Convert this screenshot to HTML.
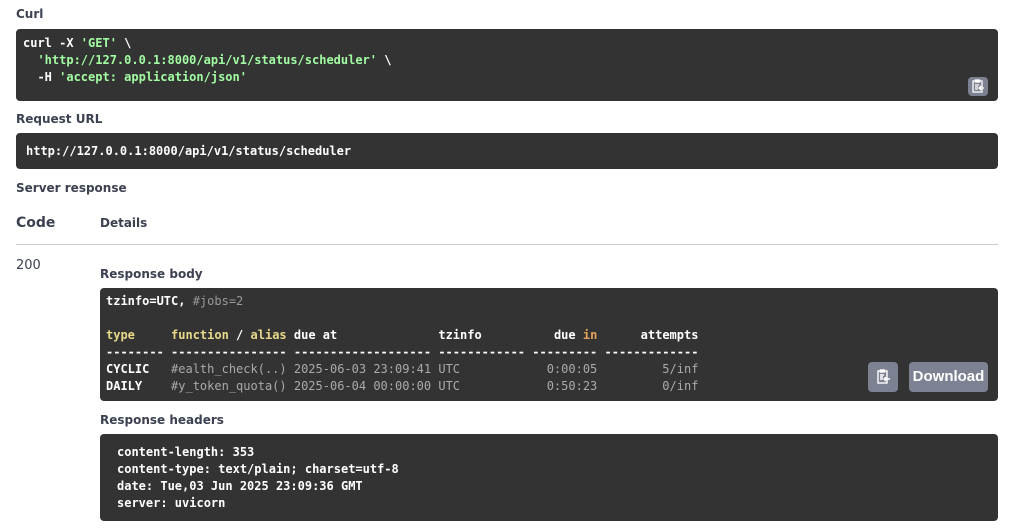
<!DOCTYPE html>
<html><head><meta charset="utf-8"><style>
*{margin:0;padding:0;box-sizing:border-box}
body{width:1012px;height:531px;background:#fff;position:relative;overflow:hidden;font-family:"DejaVu Sans","Liberation Sans",sans-serif;color:#3b4151}
.lbl{position:absolute;font-size:12px;font-weight:bold;color:#3b4151}
.box{position:absolute;background:#333;border-radius:4px}
pre{position:absolute;font-family:"DejaVu Sans Mono","Liberation Mono",monospace;font-size:12px;line-height:17px;color:#fff;font-weight:bold;white-space:pre}
.g{color:#a2fca2}.y{color:#e8d98a}.gr{color:#999}.o{color:#e3a15a}.l{color:#aaa;font-weight:normal}
.btn{position:absolute;background:#7d8293;border-radius:4px;color:#fff}
</style></head><body>
<div class="lbl" style="left:16px;top:7px">Curl</div>
<div class="box" style="left:16px;top:29px;width:982px;height:72px"></div>
<pre style="left:23px;top:35px">curl -X <span class="g">'GET'</span> \
  <span class="g">'http://127.0.0.1:8000/api/v1/status/scheduler'</span> \
  -H <span class="g">'accept: application/json'</span></pre>
<div class="btn" style="left:968px;top:77px;width:20px;height:19px"><svg width="20" height="19" viewBox="0 0 20 19"><g fill="none" stroke="#fff" stroke-width="1.3"><rect x="5" y="4" width="9" height="11"/><rect x="7.5" y="3" width="4" height="2" fill="#fff"/><path d="M7 8h4M7 10h3M7 12h3M16 11h-5M13 9l-2 2 2 2"/></g></svg></div>
<div class="lbl" style="left:16px;top:112px">Request URL</div>
<div class="box" style="left:16px;top:133px;width:982px;height:36px"></div>
<pre style="left:26px;top:143px">http://127.0.0.1:8000/api/v1/status/scheduler</pre>
<div class="lbl" style="left:16px;top:181px">Server response</div>
<div class="lbl" style="left:16px;top:215px;font-size:14px">Code</div>
<div class="lbl" style="left:100px;top:216px">Details</div>
<div style="position:absolute;left:16px;top:244px;width:982px;height:1px;background:#c9ccd3"></div>
<div style="position:absolute;left:16px;top:258px;font-size:13px">200</div>
<div class="lbl" style="left:100px;top:267px">Response body</div>
<div class="box" style="left:100px;top:288px;width:898px;height:113px"></div>
<pre style="left:106px;top:293px">tzinfo=UTC, <span class="gr" style="font-weight:normal">#jobs=2</span>

<span class="y">type</span>     <span class="y">function</span> / <span class="y">alias</span> due at              tzinfo          due <span class="o">in</span>      attempts
-------- ---------------- ------------------- ------------ --------- -------------
CYCLIC   <span class="l">#ealth_check(..) 2025-06-03 23:09:41 UTC            0:00:05         5/inf</span>
DAILY    <span class="l">#y_token_quota() 2025-06-04 00:00:00 UTC            0:50:23         0/inf</span></pre>
<div class="btn" style="left:868px;top:362px;width:30px;height:30px"><svg width="30" height="30" viewBox="0 0 30 30"><g fill="none" stroke="#fff" stroke-width="1.4"><rect x="10" y="9" width="9" height="12"/><rect x="12.5" y="8" width="4" height="2" fill="#fff"/><path d="M12 13h4M12 15h3M12 17h3M22 17h-6M18 15l-2 2 2 2"/></g></svg></div>
<div class="btn" style="left:909px;top:362px;width:79px;height:30px;font-family:'Liberation Sans',sans-serif;font-size:15px;font-weight:bold;line-height:30px;text-align:center">Download</div>
<div class="lbl" style="left:100px;top:413px">Response headers</div>
<div class="box" style="left:100px;top:434px;width:898px;height:87px"></div>
<pre style="left:117px;top:444px">content-length: 353
content-type: text/plain; charset=utf-8
date: Tue,03 Jun 2025 23:09:36 GMT
server: uvicorn</pre>
</body></html>
